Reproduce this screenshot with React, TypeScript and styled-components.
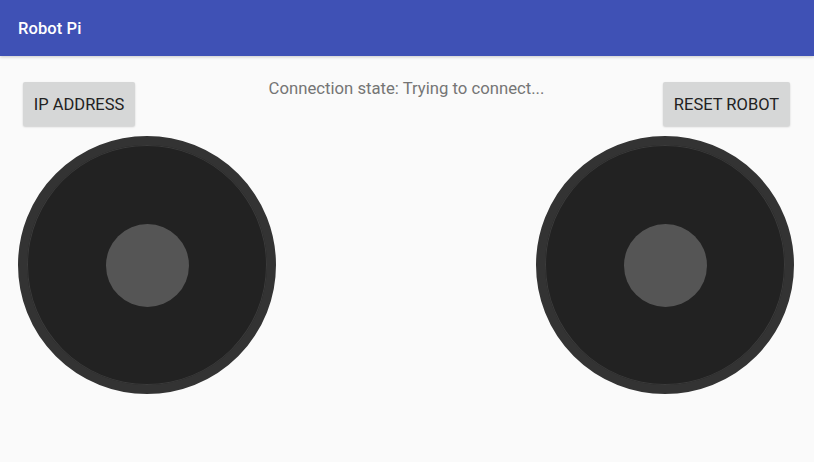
import React from "react";
import styled, { createGlobalStyle } from "styled-components";

const Global = createGlobalStyle`
  html, body { margin: 0; padding: 0; background: #fafafa; }
  body { font-family: Roboto, "Noto Sans", "Liberation Sans", sans-serif; }
  #root { width: 814px; height: 462px; overflow: hidden; }
`;

const Screen = styled.div`
  width: 814px;
  height: 462px;
  display: flex;
  flex-direction: column;
  background: #fafafa;
`;

const AppBar = styled.header`
  height: 56px;
  flex: none;
  background: #3f51b5;
  display: flex;
  align-items: center;
  padding: 0 18px;
  box-shadow: 0 1px 3px rgba(0, 0, 0, 0.2);
`;

const Title = styled.h1`
  margin: 0;
  color: #ffffff;
  font-size: 16.5px;
  font-weight: 500;
  letter-spacing: 0.1px;
`;

const Body = styled.main`
  flex: 1;
  display: flex;
  flex-direction: column;
  padding-top: 18px;
`;

const TopRow = styled.div`
  display: grid;
  grid-template-columns: 1fr auto 1fr;
  align-items: start;
  padding: 0 24px 0 23px;
`;

const Button = styled.button<{ $align: "start" | "end"; $width: number }>`
  justify-self: ${(p) => p.$align};
  width: ${(p) => p.$width}px;
  margin-top: 8px;
  height: 44px;
  padding: 0;
  border: none;
  border-radius: 2px;
  background: #d6d7d7;
  color: #222222;
  font-family: Roboto, "Noto Sans", "Liberation Sans", sans-serif;
  font-size: 16.5px;
  font-weight: 400;
  text-transform: uppercase;
  box-shadow: 0 1px 2px rgba(0, 0, 0, 0.18);
`;

const Status = styled.div`
  color: #757575;
  font-size: 16.7px;
  line-height: 24px;
  margin-top: 3px;
`;

const StickRow = styled.div`
  display: flex;
  justify-content: space-between;
  padding: 0 20px 0 18px;
  margin-top: 10px;
`;

const Stick = styled.div`
  width: 258px;
  height: 258px;
  box-sizing: border-box;
  border-radius: 50%;
  background: #222222;
  border: 9px solid #333333;
  box-shadow: inset 0 0 0 1px #3b3b3b;
  display: flex;
  align-items: center;
  justify-content: center;
`;

const Knob = styled.div`
  width: 83px;
  height: 83px;
  border-radius: 50%;
  background: #555555;
`;

export default function App() {
  return (
    <Screen>
      <Global />
      <AppBar>
        <Title>Robot Pi</Title>
      </AppBar>
      <Body>
        <TopRow>
          <Button $align="start" $width={112}>IP Address</Button>
          <Status>Connection state: Trying to connect...</Status>
          <Button $align="end" $width={127}>Reset Robot</Button>
        </TopRow>
        <StickRow>
          <Stick>
            <Knob />
          </Stick>
          <Stick>
            <Knob />
          </Stick>
        </StickRow>
      </Body>
    </Screen>
  );
}
